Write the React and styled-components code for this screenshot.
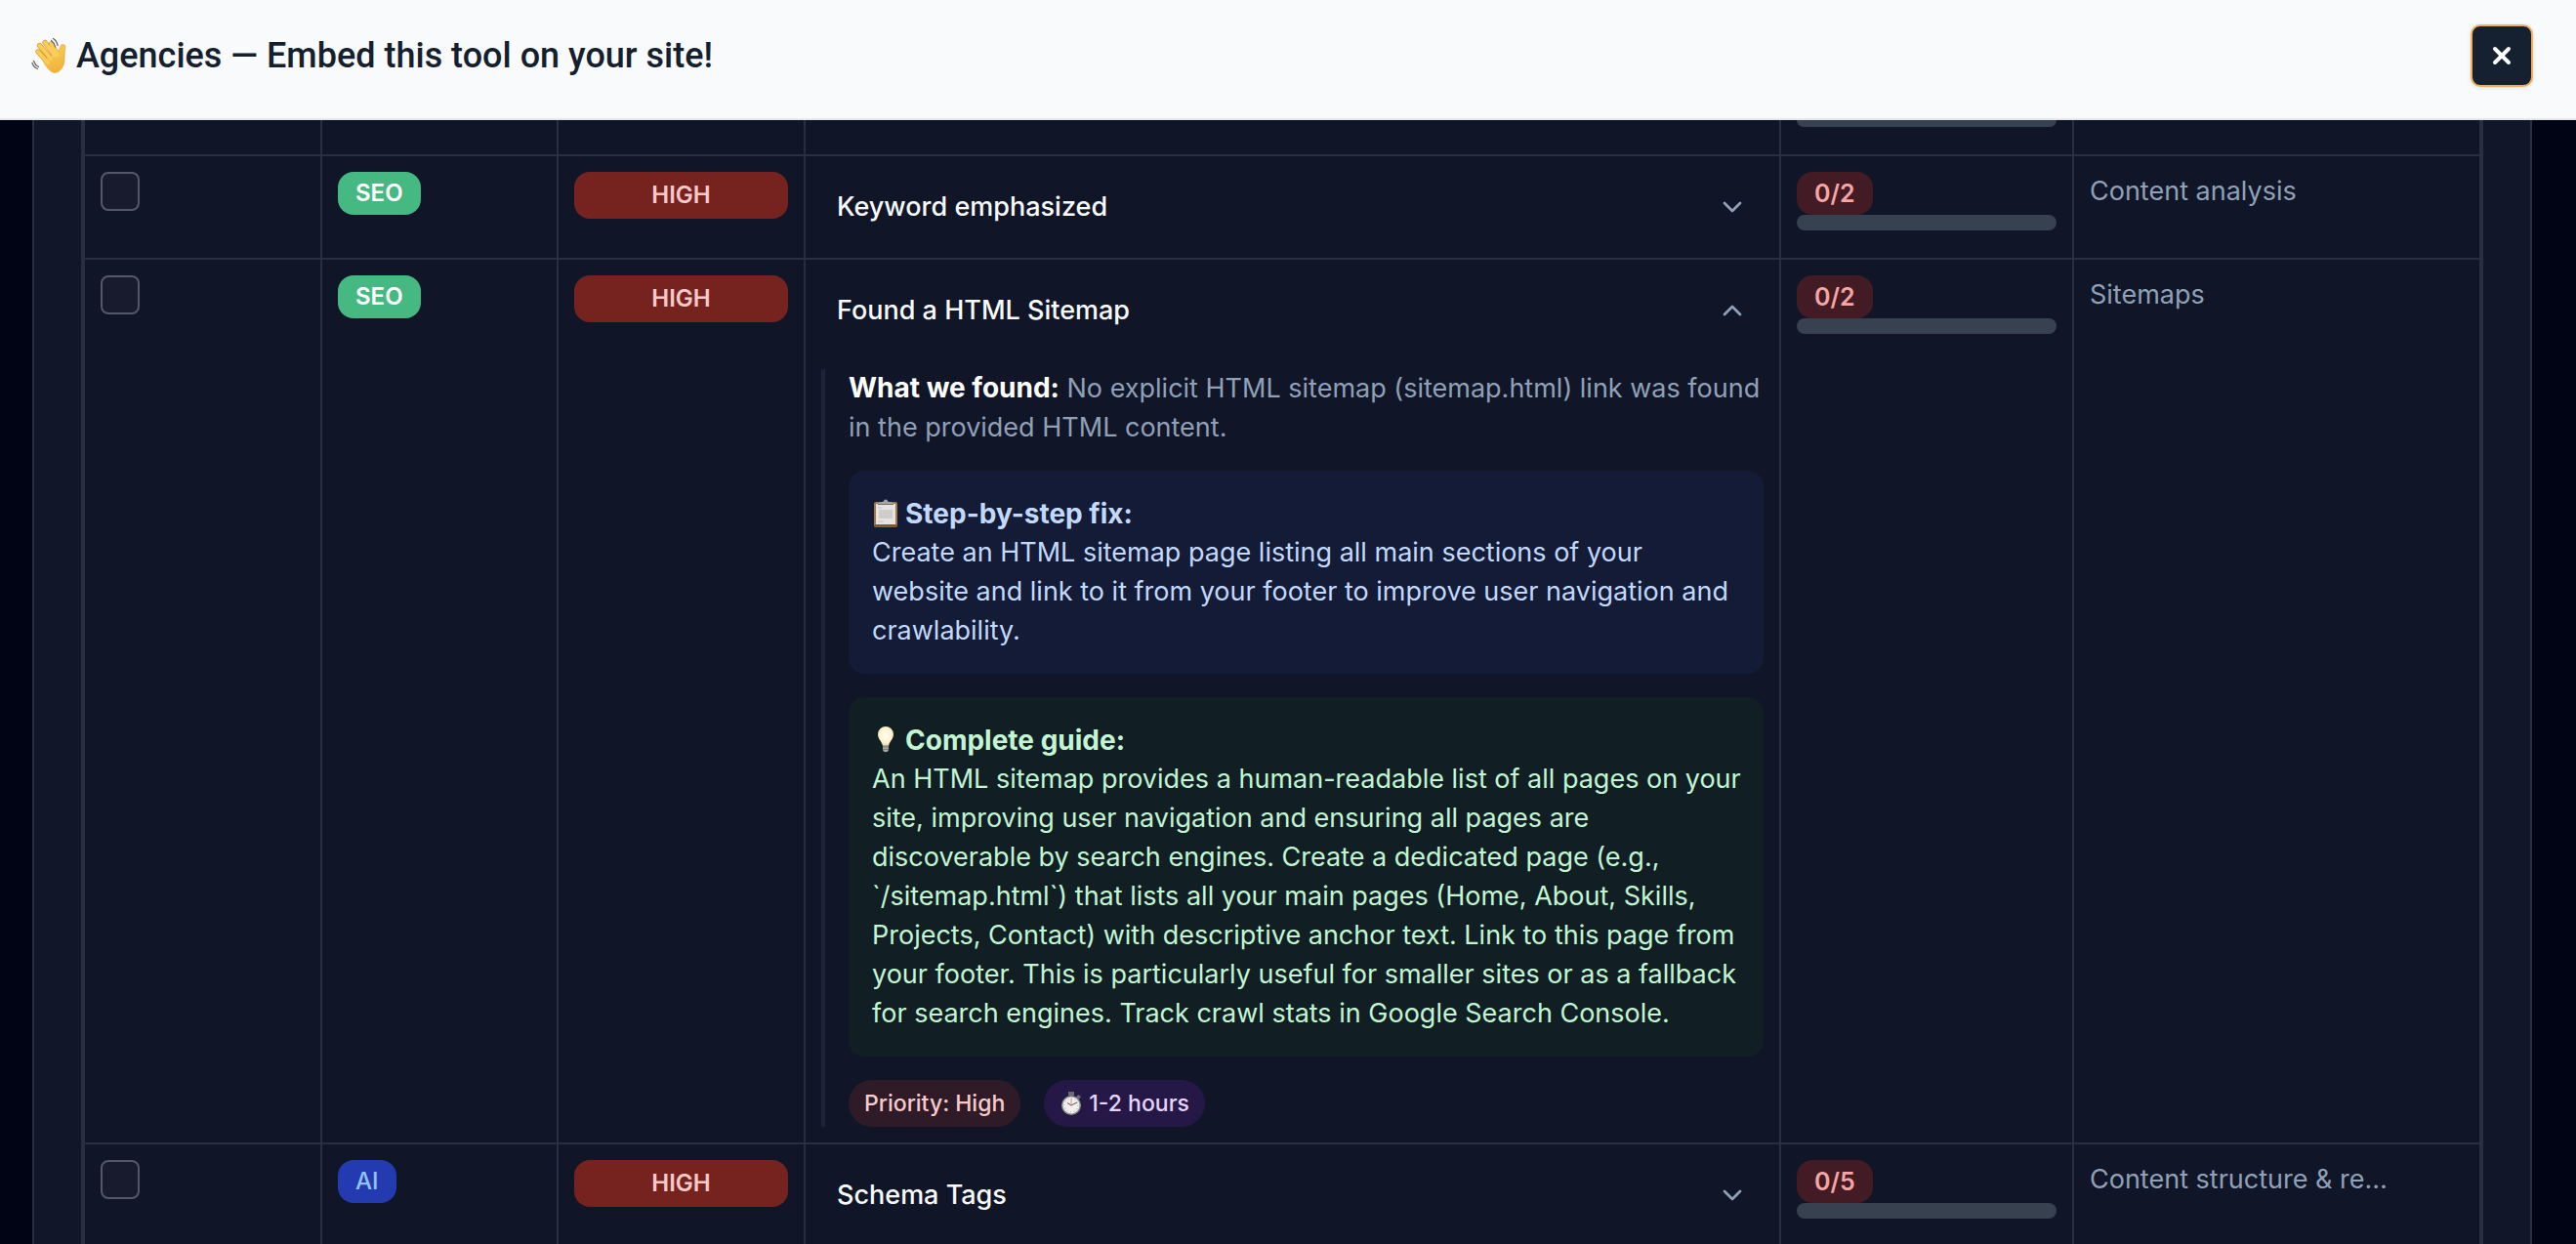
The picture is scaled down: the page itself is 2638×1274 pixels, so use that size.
import React from "react";
import styled, { createGlobalStyle } from "styled-components";
import { ChevronDown, ChevronUp } from "lucide-react";

const line = "#292f40";

const Global = createGlobalStyle`
  *, *::before, *::after { box-sizing: border-box; }
  html, body { margin: 0; background: #010414; }
  body {
    font-family: Inter, "Liberation Sans", sans-serif;
    font-size: 27px;
    line-height: 40px;
    color: #90a0b7;
  }
  button { font: inherit; color: inherit; border: 0; background: none; cursor: pointer; }
`;

const Page = styled.div`
  display: flex;
  flex-direction: column;
  height: 100vh;
  overflow: hidden;
`;

const Banner = styled.header`
  display: flex;
  flex: none;
  align-items: flex-start;
  justify-content: space-between;
  padding: 25px 44px 32px 32px;
  border-bottom: 2px solid #e6e9ec;
  background: #f9fafc;
`;

const BannerTitle = styled.h1`
  display: flex;
  align-items: center;
  gap: 10px;
  margin: 0;
  height: 64px;
  font-family: Roboto, sans-serif;
  font-size: 36px;
  font-weight: 500;
  color: #15202f;
`;

const CloseButton = styled.button`
  display: grid;
  place-items: center;
  width: 64px;
  height: 64px;
  padding: 0;
  border: 2px solid #f0ae58;
  border-radius: 10px;
  background: #152131;
  color: #fff;
  box-shadow: 0 1px 4px rgba(0, 0, 0, 0.12);
`;

const Panel = styled.main`
  flex: 1;
  min-height: 0;
  overflow: hidden;
  margin: 0 45px 0 33px;
  padding: 0 48px;
  border: solid ${line};
  border-width: 0 2px;
  background: #111729;
`;

const TableFrame = styled.div`
  border: solid ${line};
  border-width: 0 2px;
  background: #101628;
`;

const Table = styled.table`
  width: 100%;
  table-layout: fixed;
  border-collapse: separate;
  border-spacing: 0;
`;

const Col = styled.col`
  width: ${(p) => p.$w || "auto"};
`;

const Row = styled.tr`
  height: ${(p) => (p.$short ? "37px" : "auto")};
`;

const Cell = styled.td`
  padding: ${(p) => (p.$flush ? "0 16px" : "16px")};
  vertical-align: top;
  border: solid ${line};
  border-width: 0 2px 2px 0;
  &:first-child { border-left-width: 2px; }
`;

const Check = styled.input`
  display: block;
  appearance: none;
  width: 40px;
  height: 40px;
  margin: 0;
  border: 2px solid #525867;
  border-radius: 8px;
  background: #171b2d;
`;

const tones = {
  SEO: ["#46b982", "#ffffff"],
  AI: ["#233ab0", "#93c2fb"],
  score: ["#431b24", "#f5a5a3"],
};

const Badge = styled.span`
  display: block;
  width: fit-content;
  padding: 4px 18px;
  border-radius: 16px;
  font-size: ${(p) => (p.$tone === "score" ? "25px" : "24px")};
  line-height: 36px;
  font-weight: ${(p) => (p.$tone === "AI" ? 500 : 600)};
  background: ${(p) => tones[p.$tone][0]};
  color: ${(p) => tones[p.$tone][1]};
`;

const Level = styled.span`
  display: block;
  padding: 4px 16px;
  border-radius: 16px;
  background: #762320;
  color: #f8c9c8;
  font-size: 24px;
  line-height: 40px;
  font-weight: 600;
  text-align: center;
`;

const Bar = styled.div`
  height: ${(p) => (p.$cut ? "7px" : "16px")};
  border-radius: ${(p) => (p.$cut ? "0 0 8px 8px" : "8px")};
  background: #38414f;
`;

const Category = styled.div`
  white-space: nowrap;
`;

const Toggle = styled.button`
  display: flex;
  align-items: center;
  justify-content: space-between;
  width: 100%;
  padding: 16px;
  font-weight: 500;
  text-align: left;
  color: #f8fafc;
  svg { color: #90a0b7; }
`;

const Details = styled.div`
  display: flex;
  flex-direction: column;
  gap: 24px;
  margin-top: 24px;
  padding-left: 24px;
  border-left: 4px solid #1c2537;
`;

const Finding = styled.p`
  margin: 0;
  strong { font-size: 28px; line-height: 1; font-weight: 700; color: #fff; }
`;

const Note = styled.section`
  padding: 24px 20px 24px 24px;
  border-radius: 16px;
  background: ${(p) => (p.$green ? "#111f25" : "#141b36")};
  color: ${(p) => (p.$green ? "#c3f5d3" : "#c2d9fb")};
`;

const NoteTitle = styled.h2`
  display: flex;
  align-items: center;
  gap: 8px;
  margin: 0;
  font-size: 28px;
  line-height: 40px;
  font-weight: 700;
`;

const NoteText = styled.p`
  margin: 0;
`;

const Pills = styled.div`
  display: flex;
  gap: 24px;
`;

const Pill = styled.span`
  display: flex;
  align-items: center;
  gap: 6px;
  padding: 4px 16px;
  border-radius: 24px;
  font-size: 23px;
  line-height: 40px;
  font-weight: 500;
  background: ${(p) => (p.$purple ? "#251846" : "#2f1b28")};
  color: ${(p) => (p.$purple ? "#e6d6fd" : "#f8caca")};
`;

const Wave = () => (
  <svg width="36" height="38" viewBox="0 0 36 38" aria-hidden="true">
    <defs>
      <linearGradient id="skin" x1="0" y1="0" x2="0.4" y2="1">
        <stop offset="0" stopColor="#fbd25c" />
        <stop offset="1" stopColor="#f0b43c" />
      </linearGradient>
    </defs>
    <g fill="none" stroke="#d9982f" strokeLinecap="round" strokeWidth="5.2">
      <path d="M7 15 17 26M8.500 8.500 20 22M14 5.500 24 19M20.500 7 27 18" />
    </g>
    <path d="M12 24 26 16c2 0 3-5 4-7 1-2 5-2 5 1-1 4-1 8-1 12 0 8-4 14-10 14.500-4 0-9-6-12-12.500Z" fill="url(#skin)" stroke="#e3a638" strokeWidth="0.700" />
    <g fill="none" stroke="#f9cd58" strokeLinecap="round" strokeWidth="4">
      <path d="M7 15 17 26M8.500 8.500 20 22M14 5.500 24 19M20.500 7 27 18" />
    </g>
    <g fill="none" stroke="#646669" strokeLinecap="round" strokeWidth="1.300">
      <path d="M20.500 3.500c2 1.500 3.500 3.500 4 6.500M22.500 1.500c2.500 1.500 4 4 4.500 7M1 26.500c1 3 3 5 5.500 6M2.500 24.500c1 3 3 5 5 6" />
    </g>
  </svg>
);

const Clipboard = () => (
  <svg width="26" height="30" viewBox="0 0 26 30" aria-hidden="true">
    <rect x="2" y="3" width="24" height="26" rx="2" fill="#a5793c" />
    <path d="M2.500 27.500h23" stroke="#76501f" strokeWidth="2" />
    <rect x="4" y="5" width="20" height="21" fill="#e6e4e3" />
    <rect x="7" y="11" width="14" height="9" fill="#cfcdcc" />
    <path d="M6 9h4M6 23h6" stroke="#c4c2c1" />
    <path d="M6 5c0-1.500 4-1.500 6-2.500a2 2 0 0 1 4 0c2 1 6 1 6 2.500Z" fill="#a4a8ae" />
    <path d="M6 5.500h16" stroke="#74706a" />
  </svg>
);

const Bulb = () => (
  <svg width="26" height="30" viewBox="0 0 26 30" aria-hidden="true">
    <defs>
      <radialGradient id="glow" cx="0.5" cy="0.45" r="0.55">
        <stop offset="0" stopColor="#fffdf4" />
        <stop offset="0.7" stopColor="#fcf1d0" />
        <stop offset="1" stopColor="#ecd592" />
      </radialGradient>
    </defs>
    <path d="M14 1a8 8 0 0 0-8 8c0 5 4 7 5 12h6c1-5 5-7 5-12a8 8 0 0 0-8-8Z" fill="url(#glow)" />
    <path d="M11 20h6v5c-1 3-5 3-6 0Z" fill="#a9a7a5" />
    <path d="M11 22h6M11 24.500h6" stroke="#77706a" strokeWidth="0.800" />
  </svg>
);

const Watch = () => (
  <svg width="24" height="26" viewBox="0 0 24 26" aria-hidden="true">
    <path d="M9 1h6v4H9zM19 4l3 2-2 3-3-2z" fill="#6c6c6c" />
    <circle cx="12" cy="15" r="10" fill="#8e9092" />
    <circle cx="12" cy="15" r="8.500" fill="#f1f0ee" />
    <circle cx="12" cy="15" r="7" fill="none" stroke="#8b8b8b" strokeDasharray="0.700 2.965" />
    <path d="m8 12.500 4 2.500 6-3" fill="none" stroke="#555" />
    <path d="M12 16V8" stroke="#e0937c" />
  </svg>
);

const Cross = () => (
  <svg width="20" height="20" viewBox="0 0 20 20" aria-hidden="true">
    <path d="m3 3 14 14M17 3 3 17" stroke="currentColor" strokeWidth="4" strokeLinecap="round" />
  </svg>
);

const rows = [
  { kind: "SEO", title: "Keyword emphasized", score: "0/2", category: "Content analysis" },
  { kind: "SEO", title: "Found a HTML Sitemap", score: "0/2", category: "Sitemaps", open: true },
  { kind: "AI", title: "Schema Tags", score: "0/5", category: "Content structure & re…" },
];

function SitemapDetails() {
  return (
    <Details>
      <Finding>
        <strong>What we found:</strong> No explicit HTML sitemap (sitemap.html) link was found in the
        provided HTML content.
      </Finding>
      <Note>
        <NoteTitle><Clipboard />Step-by-step fix:</NoteTitle>
        <NoteText>
          Create an HTML sitemap page listing all main sections of your website and link to it from
          your footer to improve user navigation and crawlability.
        </NoteText>
      </Note>
      <Note $green>
        <NoteTitle><Bulb />Complete guide:</NoteTitle>
        <NoteText>
          An HTML sitemap provides a human-readable list of all pages on your site, improving user
          navigation and ensuring all pages are discoverable by search engines. Create a dedicated
          page (e.g., `/sitemap.html`) that lists all your main pages (Home, About, Skills,
          Projects, Contact) with descriptive anchor text. Link to this page from your footer. This
          is particularly useful for smaller sites or as a fallback for search engines. Track crawl
          stats in Google Search Console.
        </NoteText>
      </Note>
      <Pills>
        <Pill>Priority: High</Pill>
        <Pill $purple><Watch />1-2 hours</Pill>
      </Pills>
    </Details>
  );
}

export default function App() {
  return (
    <>
      <Global />
      <Page>
        <Banner>
          <BannerTitle><Wave />Agencies — Embed this tool on your site!</BannerTitle>
          <CloseButton aria-label="Close"><Cross /></CloseButton>
        </Banner>
        <Panel>
          <TableFrame>
            <Table>
              <colgroup>
                <Col $w="245px" />
                <Col $w="242px" />
                <Col $w="253px" />
                <Col />
                <Col $w="300px" />
                <Col $w="417px" />
              </colgroup>
              <tbody>
                <Row $short>
                  <Cell $flush /><Cell $flush /><Cell $flush /><Cell $flush />
                  <Cell $flush><Bar $cut /></Cell>
                  <Cell $flush />
                </Row>
                {rows.map((r) => (
                  <Row key={r.title}>
                    <Cell><Check type="checkbox" aria-label={r.title} /></Cell>
                    <Cell><Badge $tone={r.kind}>{r.kind}</Badge></Cell>
                    <Cell><Level>HIGH</Level></Cell>
                    <Cell>
                      <Toggle aria-expanded={Boolean(r.open)}>
                        {r.title}
                        {r.open ? <ChevronUp size={32} /> : <ChevronDown size={32} />}
                      </Toggle>
                      {r.open && <SitemapDetails />}
                    </Cell>
                    <Cell>
                      <Badge $tone="score">{r.score}</Badge>
                      <Bar />
                    </Cell>
                    <Cell><Category>{r.category}</Category></Cell>
                  </Row>
                ))}
              </tbody>
            </Table>
          </TableFrame>
        </Panel>
      </Page>
    </>
  );
}
